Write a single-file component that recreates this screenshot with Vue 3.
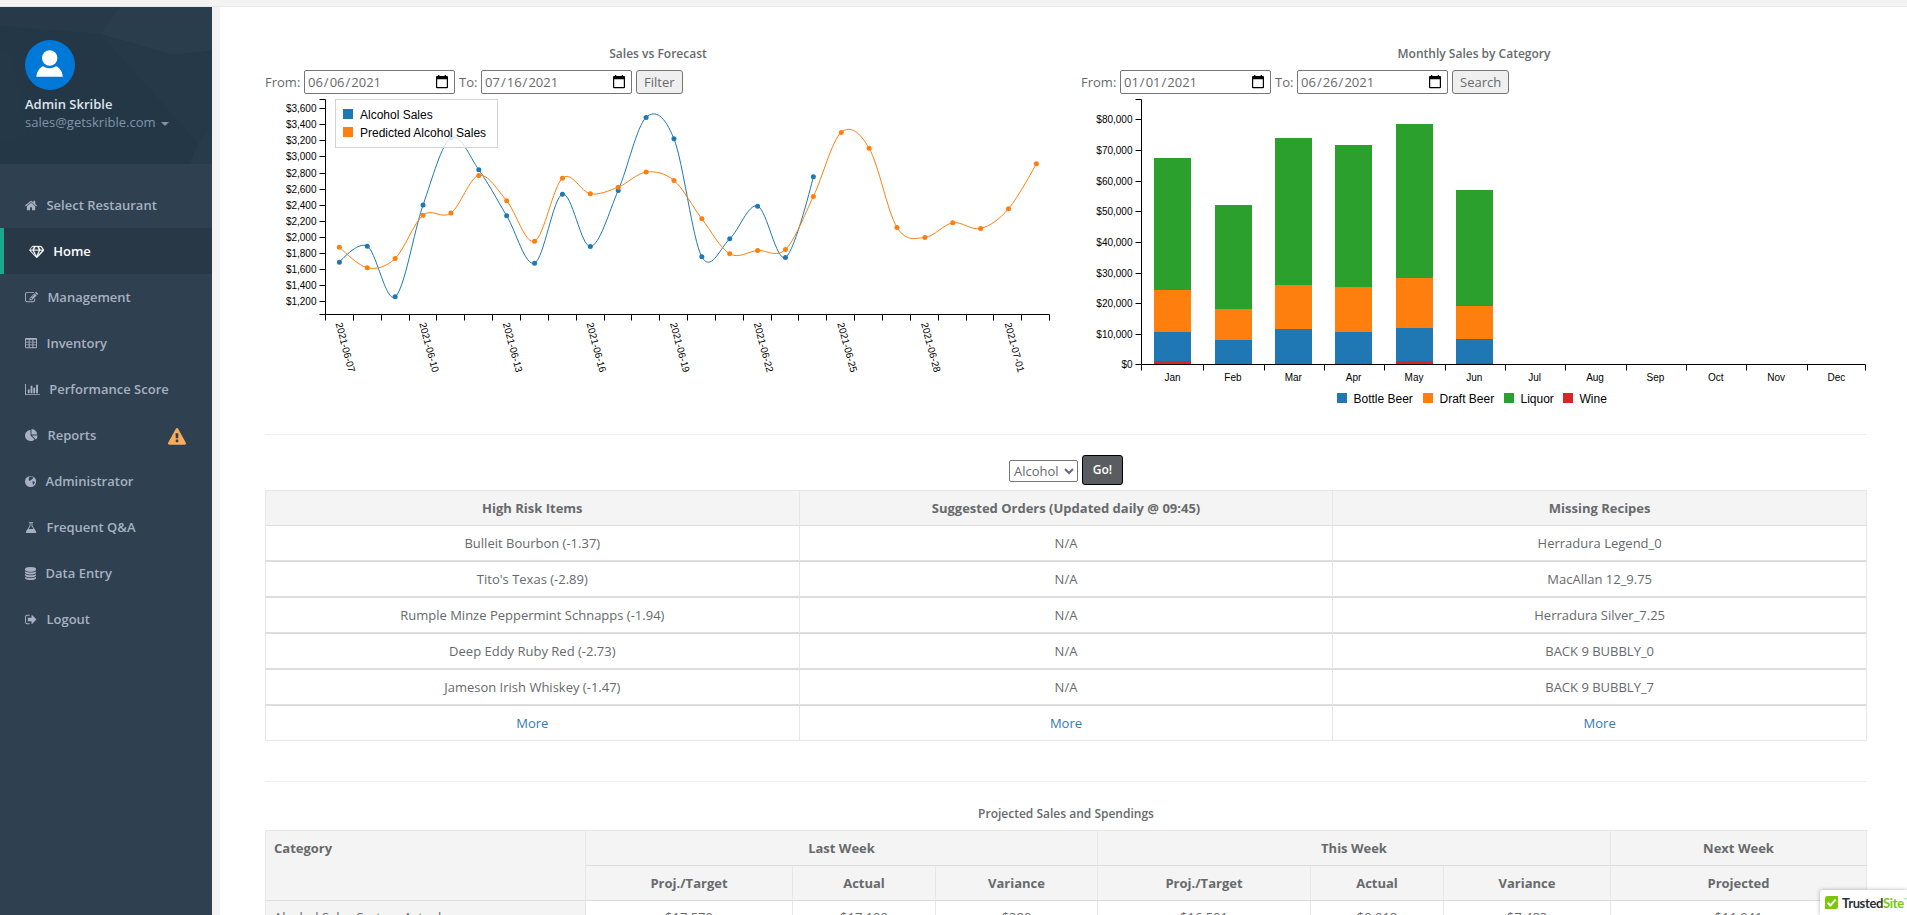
<template>
  <div class="wrapper">
    <div class="top-strip"></div>
    <div class="layout">
      <aside class="sidebar">
        <div class="nav-header">
          <svg class="nav-pattern" viewBox="0 0 212 157">
            <rect width="212" height="157" fill="#243747" />
            <path d="M0 0H120L100 27L0 19Z" fill="#273a4a" />
            <path d="M120 0H212V44L173 48L100 27Z" fill="#293d4d" />
            <path d="M100 27L173 48L212 44V124L198 136Z" fill="#263949" />
            <path d="M198 136L212 118V157H190Z" fill="#273b4b" />
            <path d="M0 43L13 52L27 127L0 138Z" fill="#253848" />
            <path d="M0 138L27 127L52 157H0Z" fill="#243747" />
          </svg>
          <div class="profile">
            <svg class="avatar" viewBox="0 0 50 50">
              <circle cx="25" cy="25" r="25" fill="#0078d7" />
              <circle cx="24.700" cy="18" r="7.700" fill="#fff" />
              <path d="M11.300 36.700C12 31.500 14.500 27.500 18.200 26.200C21.500 28.800 27.500 28.800 31 26.200C34.800 27.500 37.300 31.500 37.800 36.700Z" fill="#fff" />
            </svg>
            <strong class="profile-name">Admin Skrible</strong>
            <span class="profile-mail">sales@getskrible.com <b class="caret"></b></span>
          </div>
        </div>
        <ul class="nav">
          <li
            v-for="item in navItems"
            :key="item.label"
            class="nav-item"
            :class="{ active: item.active }"
          >
            <svg
              class="nav-icon"
              :viewBox="`${item.left} 0 ${item.width} 1792`"
              :width="(item.width / 1792) * 13"
              height="13"
            >
              <path :d="item.icon" fill="currentColor" fill-rule="evenodd" />
            </svg>
            <span>{{ item.label }}</span>
            <svg v-if="item.warning" class="nav-warning" viewBox="0 0 1792 1792">
              <path :d="warningIcon" fill="#f8ac59" />
            </svg>
          </li>
        </ul>
      </aside>

      <main class="content">
        <div class="charts">
          <section class="chart">
            <h5>Sales vs Forecast</h5>
            <div class="filters">
              <template v-for="field in salesRange" :key="field.label">
                <label>{{ field.label }}</label>
                <div class="date">
                  <input type="date" :value="field.value" />
                  <svg width="12" height="14" viewBox="0 0 12 14">
                    <path :d="calendarIcon" fill-rule="evenodd" />
                  </svg>
                </div>
              </template>
              <button class="btn-filter">Filter</button>
            </div>
            <svg class="plot" width="786" height="320" viewBox="265 94 786 320">
              <path :d="linePath(sales)" class="line blue" />
              <path :d="linePath(predicted)" class="line orange" />
              <circle
                v-for="(y, i) in sales"
                :key="'s' + i"
                :cx="pointX(i)"
                :cy="pointY(y)"
                r="2.5"
                fill="#1f77b4"
              />
              <circle
                v-for="(y, i) in predicted"
                :key="'p' + i"
                :cx="pointX(i)"
                :cy="pointY(y)"
                r="2.5"
                fill="#ff7f0e"
              />
              <path class="axis" d="M319.500 99.500H325.500V314.500H319.500M325.500 314.500H1049.500" />
              <path
                v-for="n in 27"
                :key="'x' + n"
                class="axis"
                :d="`M${Math.floor(325.500 + (n - 1) * 27.850) + 0.500} 314.500v6`"
              />
              <g v-for="(tick, i) in salesTicks" :key="tick">
                <path class="axis" :d="`M319.500 ${salesTickY[i]}h6`" />
                <text x="316.500" :y="salesTickY[i] + 3.500" text-anchor="end">{{ tick }}</text>
              </g>
              <text
                v-for="(day, i) in dayTicks"
                :key="day"
                :transform="`translate(${pointX(i * 3)} 314.500) rotate(75)`"
                x="7.730"
                y="6.100"
              >{{ day }}</text>
              <rect x="335.500" y="99.500" width="162" height="48" fill="#fff" fill-opacity=".8" stroke="#d3d3d3" />
              <rect x="343" y="109" width="10" height="10" fill="#1f77b4" />
              <text class="legend" x="360" y="119">Alcohol Sales</text>
              <rect x="343" y="127" width="10" height="10" fill="#ff7f0e" />
              <text class="legend" x="360" y="137">Predicted Alcohol Sales</text>
            </svg>
          </section>

          <section class="chart">
            <h5>Monthly Sales by Category</h5>
            <div class="filters">
              <template v-for="field in monthlyRange" :key="field.label">
                <label>{{ field.label }}</label>
                <div class="date">
                  <input type="date" :value="field.value" />
                  <svg width="12" height="14" viewBox="0 0 12 14">
                    <path :d="calendarIcon" fill-rule="evenodd" />
                  </svg>
                </div>
              </template>
              <button class="btn-filter">Search</button>
            </div>
            <svg class="plot" width="785" height="320" viewBox="1081 94 785 320">
              <g v-for="bar in bars" :key="bar.x">
                <rect
                  v-for="part in bar.parts"
                  :key="part.fill"
                  :x="bar.x"
                  :y="part.y"
                  width="37"
                  :height="part.height"
                  :fill="part.fill"
                />
              </g>
              <path class="axis" d="M1135.500 99.500H1141.500V364.500H1865.500" />
              <path v-for="x in monthTickX" :key="x" class="axis" :d="`M${x} 364.500v6`" />
              <g v-for="(y, i) in moneyTickY" :key="y">
                <path class="axis" :d="`M1135.500 ${y}h6`" />
                <text x="1132.500" :y="y + 3.500" text-anchor="end">{{ i === 0 ? "$0" : `$${i}0,000` }}</text>
              </g>
              <text
                v-for="(month, i) in months"
                :key="month"
                :x="1172.600 + i * 60.350"
                y="381"
                text-anchor="middle"
              >{{ month }}</text>
              <g v-for="entry in categories" :key="entry.label">
                <rect :x="entry.x" y="393" width="10" height="10" :fill="entry.fill" />
                <text class="legend" :x="entry.x + 16.500" y="403">{{ entry.label }}</text>
              </g>
            </svg>
          </section>
        </div>

        <hr />

        <div class="picker">
          <select>
            <option>Alcohol</option>
          </select>
          <button class="btn-go">Go!</button>
        </div>

        <table class="table items">
          <thead>
            <tr>
              <th>High Risk Items</th>
              <th>Suggested Orders (Updated daily @ 09:45)</th>
              <th>Missing Recipes</th>
            </tr>
          </thead>
          <tbody>
            <tr v-for="row in items" :key="row[0]">
              <td>{{ row[0] }}</td>
              <td>N/A</td>
              <td>{{ row[1] }}</td>
            </tr>
            <tr>
              <td v-for="n in 3" :key="n"><a>More</a></td>
            </tr>
          </tbody>
        </table>

        <hr class="second" />

        <h5 class="projected-title">Projected Sales and Spendings</h5>
        <table class="table projected">
          <colgroup>
            <col v-for="(w, i) in projectedCols" :key="i" :style="{ width: w + 'px' }" />
          </colgroup>
          <thead>
            <tr>
              <th rowspan="2" class="category">Category</th>
              <th colspan="3">Last Week</th>
              <th colspan="3">This Week</th>
              <th>Next Week</th>
            </tr>
            <tr>
              <th v-for="(h, i) in projectedHeads" :key="i">{{ h }}</th>
            </tr>
          </thead>
          <tbody>
            <tr>
              <td class="category">Alcohol Sales System Actual</td>
              <td v-for="v in projectedRow" :key="v">{{ v }}</td>
            </tr>
          </tbody>
        </table>
      </main>
    </div>

    <div class="trusted">
      <svg width="13" height="13" viewBox="0 0 13 13">
        <path d="M2.500 0H13V10.500A2.500 2.500 0 0 1 10.500 13H0V2.500A2.500 2.500 0 0 1 2.500 0Z" fill="#7ac70c" />
        <path d="M2.600 6.800L5.300 9.500L10.600 3.600" fill="none" stroke="#fff" stroke-width="2" />
      </svg>
      <span class="trusted-text">Trusted<em>Site</em></span>
      <span class="tm">™</span>
    </div>
  </div>
</template>

<script setup>
// Icons live in an 1792 unit em box, left/width give each glyph's advance
const navItems = [
  {
    label: "Select Restaurant",
    left: 64,
    width: 1664,
    icon: "M1472 992v480q0 26-19 45t-45 19h-384v-384h-256v384h-384q-26 0-45-19t-19-45v-480q0-1 .5-3t.5-3l575-474 575 474q1 2 1 6zm223-69l-62 74q-8 9-21 11h-3q-13 0-21-7l-692-577-692 577q-12 8-24 7-13-2-21-11l-62-74q-8-10-7-23.500t11-21.500l719-599q32-26 76-26t76 26l244 204v-195q0-14 9-23t23-9h192q14 0 23 9t9 23v408l219 182q10 8 11 21.500t-7 23.500z",
  },
  {
    label: "Home",
    active: true,
    left: 0,
    width: 2048,
    icon: "M212 768l623 665-300-665h-323zm812 772l349-772h-698zm-538-900l204-384h-262l-288 384h346zm727 793l623-665h-323zm-526-793h674l-204-384h-266zm876 0h346l-288-384h-262zm141-486l384 512q14 18 13 41.500t-17 40.500l-960 1024q-18 20-47 20t-47-20l-960-1024q-16-17-17-40.500t13-41.500l384-512q18-26 51-26h1152q33 0 51 26z",
  },
  {
    label: "Management",
    left: 0,
    width: 1792,
    icon: "M888 1184l116-116-152-152-116 116v56h96v96h56zm440-720q-16-16-33 1l-350 350q-17 17-1 33t33-1l350-350q17-17 1-33zm80 594v190q0 119-84.500 203.500t-203.500 84.500h-832q-119 0-203.500-84.500t-84.500-203.500v-832q0-119 84.500-203.500t203.500-84.500h832q63 0 117 25 15 7 18 23 3 17-9 29l-49 49q-14 14-32 8-23-6-45-6h-832q-66 0-113 47t-47 113v832q0 66 47 113t113 47h832q66 0 113-47t47-113v-126q0-13 9-22l64-64q15-15 35-7t20 29zm-96-738l288 288-672 672h-288v-288zm444 132l-92 92-288-288 92-92q28-28 68-28t68 28l152 152q28 28 28 68t-28 68z",
  },
  {
    label: "Inventory",
    left: 64,
    width: 1664,
    icon: "M224 128H1568Q1728 128 1728 288V1376Q1728 1536 1568 1536H224Q64 1536 64 1376V288Q64 128 224 128ZM192 384V640H576V384ZM704 384V640H1088V384ZM1216 384V640H1600V384ZM192 768V1024H576V768ZM704 768V1024H1088V768ZM1216 768V1024H1600V768ZM192 1152V1408H576V1152ZM704 1152V1408H1088V1152ZM1216 1152V1408H1600V1152Z",
  },
  {
    label: "Performance Score",
    left: 0,
    width: 2048,
    icon: "M640 896v512h-256v-512h256zm384-512v1024h-256v-1024h256zm1024 1152v128h-2048v-1536h128v1408h1920zm-640-896v768h-256v-768h256zm384-384v1152h-256v-1152h256z",
  },
  {
    label: "Reports",
    warning: true,
    left: 0,
    width: 1792,
    icon: "M768 890l546 546q-106 108-247.500 168t-298.500 60q-209 0-385.500-103t-279.500-279.500-103-385.500 103-385.500 279.500-279.500 385.500-103v762zm187 6h773q0 157-60 298.500t-168 247.500zm709-128h-768v-768q209 0 385.500 103t279.500 279.500 103 385.500z",
  },
  {
    label: "Administrator",
    left: 128,
    width: 1536,
    icon: "M896 128A768 768 0 1 1 896 1664A768 768 0 1 1 896 128ZM760 250L960 210L1160 290L1280 400L1190 520L1080 560L1010 700L880 740L790 820L690 760L620 640L700 520L640 430L690 330ZM1130 900L1300 860L1470 960L1440 1120L1300 1330L1190 1260L1200 1100Z",
  },
  {
    label: "Frequent Q&A",
    left: 64,
    width: 1664,
    icon: "M640 128H1152Q1216 128 1216 192Q1216 256 1152 256H1088V655L1591 1448Q1690 1664 1472 1664H320Q102 1664 201 1448L704 655V256H640Q576 256 576 192Q576 128 640 128ZM832 256V692L560 1120H1232L960 692V256Z",
  },
  {
    label: "Data Entry",
    left: 128,
    width: 1536,
    icon: "M896 768q237 0 443-43t325-127v170q0 69-103 128t-280 93.500-385 34.500-385-34.500-280-93.500-103-128v-170q119 84 325 127t443 43zm0 768q237 0 443-43t325-127v170q0 69-103 128t-280 93.500-385 34.500-385-34.500-280-93.500-103-128v-170q119 84 325 127t443 43zm0-384q237 0 443-43t325-127v170q0 69-103 128t-280 93.500-385 34.500-385-34.500-280-93.500-103-128v-170q119 84 325 127t443 43zm0-1152q208 0 385 34.500t280 93.500 103 128v128q0 69-103 128t-280 93.500-385 34.500-385-34.500-280-93.500-103-128v-128q0-69 103-128t280-93.500 385-34.500z",
  },
  {
    label: "Logout",
    left: 64,
    width: 1664,
    icon: "M704 1440q0 4 1 20t.5 26.500-3 23.500-10 19.500-20.500 6.500h-320q-119 0-203.500-84.500t-84.500-203.500v-704q0-119 84.500-203.500t203.500-84.500h320q13 0 22.500 9.500t9.500 22.500q0 4 1 20t.5 26.500-3 23.500-10 19.500-20.500 6.500h-320q-66 0-113 47t-47 113v704q0 66 47 113t113 47h312l11.500 1 11.500 3 8 5.500 7 9 2 13.500zm928-544q0 26-19 45l-544 544q-19 19-45 19t-45-19-19-45v-288h-448q-26 0-45-19t-19-45v-384q0-26 19-45t45-19h448v-288q0-26 19-45t45-19 45 19l544 544q19 19 19 45z",
  },
];

const warningIcon =
  "M1024 1375v-190q0-14-9.500-23.500t-22.500-9.500h-192q-13 0-22.500 9.500t-9.500 23.500v190q0 14 9.500 23.500t22.500 9.500h192q13 0 22.500-9.500t9.500-23.500zm-2-374l18-459q0-12-10-19-13-11-24-11h-220q-11 0-24 11-10 7-10 21l17 457q0 10 10 16.500t24 6.500h185q14 0 23.500-6.500t10.500-16.500zm-14-934l768 1408q35 63-2 126-17 29-46.500 46t-63.500 17h-1536q-34 0-63.500-17t-46.500-46q-37-63-2-126l768-1408q17-31 47-49t65-18 65 18 47 49z";

const calendarIcon =
  "M2 0H3.300V1H8.700V0H10V1H11Q12 1 12 2V12.200Q12 13.200 11 13.200H1Q0 13.200 0 12.200V2Q0 1 1 1H2ZM1.200 4.200V12H10.800V4.200Z";

const salesRange = [
  { label: "From:", value: "2021-06-06" },
  { label: "To:", value: "2021-07-16" },
];
const monthlyRange = [
  { label: "From:", value: "2021-01-01" },
  { label: "To:", value: "2021-06-26" },
];

// Sales vs forecast, values in dollars
const sales = [
  1690, 1889, 1259, 2400, 3237, 2839, 2267, 1678, 2536, 1885, 2582, 3490, 3224,
  1757, 1980, 2387, 1748, 2752,
];
const predicted = [
  1877, 1620, 1736, 2275, 2300, 2769, 2453, 1951, 2735, 2541, 2623, 2810, 2706,
  2229, 1794, 1835, 1848, 2507, 3303, 3108, 2122, 1997, 2180, 2109, 2354, 2914,
];
const salesTicks = [
  "$3,600", "$3,400", "$3,200", "$3,000", "$2,800", "$2,600", "$2,400",
  "$2,200", "$2,000", "$1,800", "$1,600", "$1,400", "$1,200",
];
const salesTickY = [
  108.5, 124.5, 140.5, 156.5, 173.5, 189.5, 205.5, 221.5, 237.5, 253.5, 269.5,
  285.5, 301.5,
];
const dayTicks = [
  "2021-06-07", "2021-06-10", "2021-06-13", "2021-06-16", "2021-06-19",
  "2021-06-22", "2021-06-25", "2021-06-28", "2021-07-01",
];

function pointX(i) {
  return 339.4 + i * 27.88;
}

function pointY(value) {
  return 108.6 + (3600 - value) * 0.0804;
}

// Cardinal spline through every point
function linePath(values) {
  const pts = values.map((v, i) => [pointX(i), pointY(v)]);
  const last = pts.length - 1;
  let d = `M${pts[0]}`;
  for (let i = 0; i < last; i++) {
    const a = pts[i];
    const b = pts[i + 1];
    const before = i === 0 ? b : pts[i - 1];
    const after = i + 1 === last ? a : pts[i + 2];
    const c1 = [a[0] + (b[0] - before[0]) / 6, a[1] + (b[1] - before[1]) / 6];
    const c2 = [b[0] - (after[0] - a[0]) / 6, b[1] - (after[1] - a[1]) / 6];
    d += `C${c1} ${c2} ${b}`;
  }
  return d;
}

// Monthly bars: tops of liquor, draft beer, bottle beer and wine
const colors = ["#2ca02c", "#ff7f0e", "#1f77b4", "#d62728"];
const bars = [
  { x: 1154, tops: [158, 290, 332, 361] },
  { x: 1215, tops: [205, 309, 340, 364] },
  { x: 1275, tops: [138, 285, 329, 364] },
  { x: 1335, tops: [145, 287, 332, 364] },
  { x: 1396, tops: [124, 278, 328, 361] },
  { x: 1456, tops: [190, 306, 339, 363] },
].map(({ x, tops }) => ({
  x,
  parts: tops.map((y, i) => ({
    y,
    height: (tops[i + 1] ?? 364) - y,
    fill: colors[i],
  })),
}));

const months = ["Jan", "Feb", "Mar", "Apr", "May", "Jun", "Jul", "Aug", "Sep", "Oct", "Nov", "Dec"];
const monthTickX = [
  1141.5, 1203.5, 1264.5, 1324.5, 1384.5, 1445.5, 1505.5, 1565.5, 1626.5,
  1686.5, 1746.5, 1807.5, 1865.5,
];
const moneyTickY = [364.5, 334.5, 303.5, 273.5, 242.5, 211.5, 181.5, 150.5, 119.5];
const categories = [
  { label: "Bottle Beer", x: 1337, fill: "#1f77b4" },
  { label: "Draft Beer", x: 1423, fill: "#ff7f0e" },
  { label: "Liquor", x: 1504, fill: "#2ca02c" },
  { label: "Wine", x: 1563, fill: "#d62728" },
];

const items = [
  ["Bulleit Bourbon (-1.37)", "Herradura Legend_0"],
  ["Tito's Texas (-2.89)", "MacAllan 12_9.75"],
  ["Rumple Minze Peppermint Schnapps (-1.94)", "Herradura Silver_7.25"],
  ["Deep Eddy Ruby Red (-2.73)", "BACK 9 BUBBLY_0"],
  ["Jameson Irish Whiskey (-1.47)", "BACK 9 BUBBLY_7"],
];

const projectedCols = [320, 207, 143, 162, 213, 133, 167, 256];
const projectedHeads = [
  "Proj./Target", "Actual", "Variance",
  "Proj./Target", "Actual", "Variance",
  "Projected",
];
const projectedRow = ["$17,570", "$17,190", "$380", "$16,501", "$9,018", "$7,483", "$11,941"];
</script>

<style>
body {
  margin: 0;
  overflow: hidden;
}
</style>

<style scoped>
.wrapper {
  position: relative;
  height: 100vh;
  overflow: hidden;
  display: flex;
  flex-direction: column;
  background: #f3f3f4;
  color: #676a6c;
  font-family: "Open Sans", "Liberation Sans", sans-serif;
  font-size: 13px;
  line-height: 18.57px;
}

.top-strip {
  flex: none;
  height: 6px;
  border-bottom: 1px solid #e7e7e7;
}

.layout {
  flex: 1;
  min-height: 0;
  display: flex;
}

.sidebar {
  flex: none;
  width: 212px;
  margin-right: 8px;
  background: #2f4050;
}

.nav-header {
  display: grid;
  height: 157px;
}

.nav-header > * {
  grid-area: 1 / 1;
}

.profile {
  z-index: 1;
  display: flex;
  flex-direction: column;
  padding: 33px 25px 0;
}

.avatar {
  width: 50px;
  height: 50px;
  margin-bottom: 5px;
}

.profile-name {
  color: #dfe4ed;
  font-weight: 600;
  line-height: 18px;
}

.profile-mail {
  color: #8095a8;
  line-height: 18px;
  white-space: nowrap;
}

.caret {
  display: inline-block;
  margin-left: 2px;
  vertical-align: middle;
  border-top: 4px solid;
  border-right: 4px solid transparent;
  border-left: 4px solid transparent;
}

.nav {
  list-style: none;
  margin: 0;
  padding: 18px 0 0;
}

.nav-item {
  display: flex;
  align-items: center;
  height: 46px;
  box-sizing: border-box;
  padding: 0 26px 0 25px;
  color: #a7b1c2;
  font-weight: 600;
}

.nav-item.active {
  border-left: 4px solid #19aa8d;
  background: #293846;
  color: #fff;
}

.nav-icon {
  flex: none;
  margin-right: 9.4px;
}

.nav-item.active .nav-icon {
  stroke: currentColor;
  stroke-width: 40;
}

.nav-warning {
  width: 18px;
  height: 18px;
  margin: 4px 0 0 auto;
}

.content {
  flex: 1;
  background: #fff;
  padding: 38px 40.4px 0 45px;
}

.charts {
  display: flex;
  gap: 30px;
}

.chart {
  flex: 0 1 786px;
}

h5 {
  margin: 0;
  font-size: 12px;
  font-weight: 600;
  line-height: 18px;
  text-align: center;
}

.filters {
  display: flex;
  align-items: center;
  height: 24px;
  margin-top: 7px;
}

.filters label {
  margin-right: 3.7px;
}

.filters input,
.btn-filter,
select {
  box-sizing: border-box;
  font: inherit;
  color: inherit;
}

.date {
  display: flex;
  align-items: center;
  box-sizing: border-box;
  width: 151px;
  height: 24px;
  margin-right: 4px;
  padding: 0 6px 0 2px;
  border: 1px solid #767676;
  border-radius: 2px;
}

.date input {
  flex: 1;
  min-width: 0;
  height: 22px;
  margin: 0;
  padding: 0;
  border: 0;
  background: none;
}

.date input::-webkit-calendar-picker-indicator {
  display: none;
}

.date svg {
  flex: none;
  margin-bottom: 1px;
}

.btn-filter {
  height: 24px;
  margin: 0;
  padding: 1px 7px;
  border: 1px solid #767676;
  border-radius: 3px;
  background: #efefef;
}

.plot {
  display: block;
}

.plot text {
  font-family: "Liberation Sans", Arial, sans-serif;
  font-size: 10px;
  fill: #000;
}

.plot text.legend {
  font-size: 12px;
}

.axis {
  fill: none;
  stroke: #000;
}

.line {
  fill: none;
  stroke-width: 1;
}

.line.blue {
  stroke: #1f77b4;
}

.line.orange {
  stroke: #ff7f0e;
}

hr {
  height: 0;
  margin: 20px 0;
  border: 0;
  border-top: 1px solid #eee;
}

hr.second {
  margin: 40px 0 23px;
}

.picker {
  display: flex;
  justify-content: center;
  align-items: flex-start;
  gap: 4px;
  margin-bottom: 5px;
}

select {
  width: 69px;
  height: 22px;
  margin: 5px 0 0;
  padding: 0;
  border: 1px solid #767676;
  border-radius: 2px;
  background: #fff;
}

.btn-go {
  width: 41px;
  height: 30px;
  margin: 0;
  padding: 0 0 1px;
  border: 1px solid #000;
  border-radius: 3px;
  background: #595c60;
  color: #fff;
  font: 600 12px "Open Sans", sans-serif;
}

.table {
  width: 100%;
  border-collapse: separate;
  border-spacing: 0;
  table-layout: fixed;
  border-left: 1px solid #e7e7e7;
}

.table th,
.table td {
  box-sizing: border-box;
  padding: 0 8px;
  border-right: 1px solid #e7e7e7;
  text-align: center;
}

.table th {
  background: #f4f4f4;
  font-weight: 700;
}

.items th {
  height: 36px;
  border-top: 1px solid #e7e7e7;
  border-bottom: 1px solid #ddd;
}

.items td {
  height: 36px;
  border-bottom: 2px solid #ddd;
}

.items tr:last-child td {
  height: 35px;
  border-bottom: 1px solid #e7e7e7;
}

.items a {
  color: #337ab7;
}

.projected-title {
  margin-bottom: 7px;
}

.projected th {
  height: 35px;
  border-bottom: 1px solid #ddd;
}

.projected tr:first-child th {
  height: 36px;
  border-top: 1px solid #e7e7e7;
}

.projected td {
  height: 36px;
  padding-top: 7px;
  border-bottom: 1px solid #ddd;
  vertical-align: top;
}

.table .category {
  background: #f4f4f4;
  text-align: left;
}

.table th.category {
  padding-top: 8px;
  vertical-align: top;
}

.trusted {
  position: absolute;
  right: 0;
  bottom: 0;
  display: flex;
  width: 87px;
  height: 25px;
  box-sizing: border-box;
  padding: 6px 0 0 5px;
  border-top-left-radius: 3px;
  background: #fff;
  box-shadow: 0 0 4px rgba(0, 0, 0, 0.3);
  overflow: hidden;
}

.trusted svg {
  flex: none;
}

.trusted-text {
  margin-left: 4px;
  font-family: Lato, sans-serif;
  font-size: 13px;
  font-weight: 700;
  line-height: 14px;
  letter-spacing: -0.35px;
  color: #2b3332;
}

.trusted-text em {
  font-style: normal;
  color: #7ac70c;
}

.tm {
  font-size: 4px;
  line-height: 8px;
  color: #7ac70c;
}
</style>
